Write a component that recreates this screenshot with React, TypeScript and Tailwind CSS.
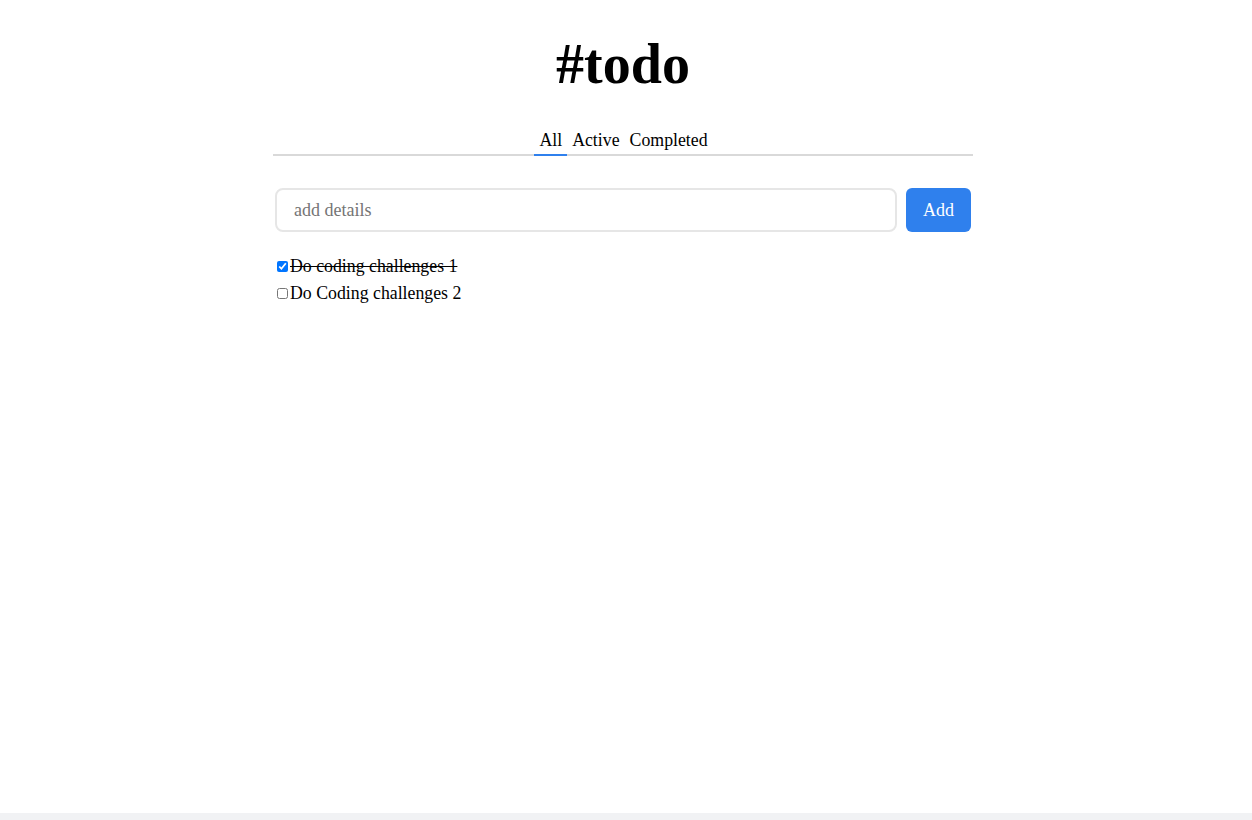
import React from "react";

export default function App() {
  return (
    <div className="w-[1252px] h-[820px] bg-[#f1f2f4] overflow-hidden" style={{ fontFamily: '"Liberation Serif", serif' }}>
      <div className="h-[813px] bg-white">
        <div className="w-[1246px]">
          <div className="w-[700px] mx-auto">
            <h1 className="text-center font-bold text-[56px] leading-none pt-[36px] text-black">#todo</h1>
            <div className="mt-[37px] flex justify-center border-b-2 border-[#d9d9d9] text-[17.8px] leading-[22px] pl-[1px]">
              <div className="px-[5px] pb-[3px] border-b-2 border-[#2f80ed] -mb-[2px]">All</div>
              <div className="px-[5px] pb-[3px]">Active</div>
              <div className="px-[5px] pb-[3px]">Completed</div>
            </div>
            <div className="mt-[32px] flex items-center gap-[9px] px-[2px]">
              <input
                placeholder="add details"
                className="flex-1 h-[44px] rounded-[8px] border-2 border-[#e6e6e6] px-[17px] text-[18px] outline-none placeholder:text-[#757575]"
                style={{ fontFamily: '"Liberation Serif", serif' }}
              />
              <button className="w-[65px] h-[44px] rounded-[6px] bg-[#2f80ed] text-white text-[18px]" style={{ fontFamily: '"Liberation Serif", serif' }}>Add</button>
            </div>
            <div className="mt-[21px] px-[2px] text-[17.8px] leading-[27px] text-black">
              <label className="flex items-center">
                <input type="checkbox" defaultChecked className="w-[11px] h-[11px] mx-[2px]" />
                <span className="line-through">Do coding challenges 1</span>
              </label>
              <label className="flex items-center">
                <input type="checkbox" className="w-[11px] h-[11px] mx-[2px]" />
                <span>Do Coding challenges 2</span>
              </label>
            </div>
          </div>
        </div>
      </div>
    </div>
  );
}
